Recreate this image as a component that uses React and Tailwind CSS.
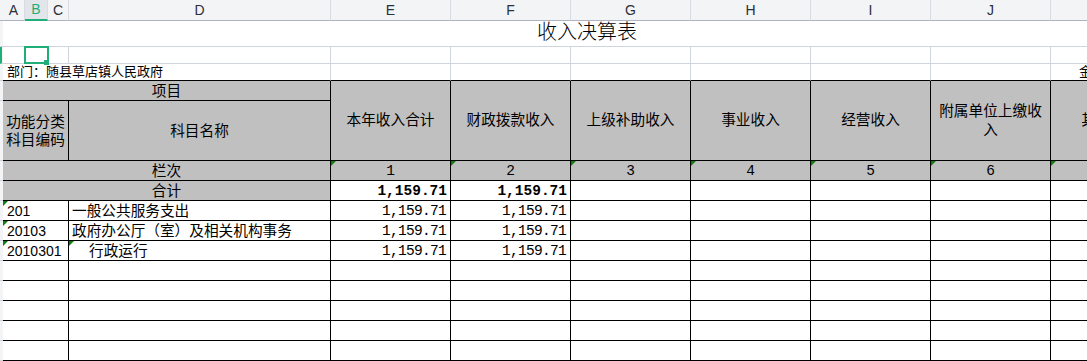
import React from "react";

const cols = ["A", "B", "C", "D", "E", "F", "G", "H", "I", "J", "K"];
const heads = ["本年收入合计", "财政拨款收入", "上级补助收入", "事业收入", "经营收入", "附属单位上缴收入", "其他收入"];
const dataRows = [
  { code: "201", name: "一般公共服务支出", e: "1,159.71", f: "1,159.71", indent: false, tri: false },
  { code: "20103", name: "政府办公厅（室）及相关机构事务", e: "1,159.71", f: "1,159.71", indent: false, tri: false },
  { code: "2010301", name: "行政运行", e: "1,159.71", f: "1,159.71", indent: true, tri: true },
  { code: "", name: "", e: "", f: "" },
  { code: "", name: "", e: "", f: "" },
  { code: "", name: "", e: "", f: "" },
  { code: "", name: "", e: "", f: "" },
  { code: "", name: "", e: "", f: "" },
];

const cjk = "font-['Liberation_Sans','Noto_Sans_CJK_SC',sans-serif]";
const mono = "font-['Liberation_Mono','Noto_Sans_CJK_SC',monospace]";
const strip = "bg-[#f3f4f6] border-b border-[#cfd4dd]";
const gridCell = "border-r border-b border-[#cfd4dd] bg-white";
const blk = "border-r border-b border-black";
const gray = "bg-[#c0c0c0]";

function Tri() {
  return (
    <div className="absolute left-0 top-0 w-0 h-0 border-t-[5px] border-r-[5px] border-t-[#0a7f0a] border-r-transparent" />
  );
}

export default function App() {
  return (
    <div className="w-[1087px] h-[361px] overflow-hidden bg-white text-black">
      <div className="grid w-[1171px] grid-cols-[3px_22px_23px_21px_262px_repeat(7,120px)] grid-rows-[21px_26px_17px_17px_20px_60px_repeat(10,20px)]">
        {/* column header row */}
        <div className="bg-[#f3f4f6] border-b border-[#aeb4c3]" />
        {cols.map((c) =>
          c === "B" ? (
            <div
              key={c}
              className={`flex items-center justify-center bg-[#e2e5ea] border-r border-r-[#d7dbe2] border-b-2 border-b-[#1fae78] text-[14px] text-[#1fae78] ${cjk}`}
            >
              {c}
            </div>
          ) : (
            <div
              key={c}
              className={`flex items-center justify-center bg-[#f3f4f6] border-r border-b border-r-[#d7dbe2] border-b-[#aeb4c3] text-[14px] text-[#2b2f3a] ${cjk}`}
            >
              {c}
            </div>
          )
        )}

        {/* title row */}
        <div className={strip} />
        <div className={`col-span-11 flex items-end justify-center pb-[2px] border-b border-[#cfd4dd] text-[20px] font-light leading-[24px] ${cjk}`}>
          收入决算表
        </div>

        {/* row 2 with selection */}
        <div className="bg-[#f3f4f6] border-b border-[#cfd4dd] border-l-2 border-l-[#1fae78]" />
        {cols.map((c) =>
          c === "B" ? (
            <div key={c} className={`${gridCell} relative`}>
              <div className="absolute -left-[1px] -top-[1px] w-[25px] h-[18px] border-2 border-[#1fae78]" />
              <div className="absolute -right-[2px] -bottom-[2px] w-[5px] h-[5px] bg-[#1fae78]" />
            </div>
          ) : (
            <div key={c} className={gridCell} />
          )
        )}

        {/* row 3: department */}
        <div className={strip} />
        <div className={`col-span-4 flex items-end pl-[4px] border-r border-[#cfd4dd] border-b border-b-black text-[13px] leading-[16px] ${cjk}`}>
          部门：随县草店镇人民政府
        </div>
        {[0, 1, 2, 3, 4, 5].map((i) => (
          <div key={i} className="border-r border-[#cfd4dd] border-b border-b-black" />
        ))}
        <div className={`flex items-end pl-[28px] whitespace-nowrap overflow-hidden border-r border-[#cfd4dd] border-b border-b-black text-[13px] leading-[16px] ${cjk}`}>
          金额单位：万元
        </div>

        {/* row 4 / 5 : header */}
        <div className={strip} />
        <div className={`col-span-4 flex items-center justify-center ${gray} ${blk} text-[14.67px] leading-[18px] ${cjk}`}>
          项目
        </div>
        {heads.map((h) => (
          <div
            key={h}
            className={`row-span-2 flex items-center justify-center text-center px-[8px] ${gray} ${blk} text-[14.67px] leading-[19px] ${cjk}`}
          >
            {h}
          </div>
        ))}
        <div className={strip} />
        <div className={`col-span-3 flex items-center justify-center text-center ${gray} ${blk} text-[14.67px] leading-[18px] ${cjk}`}>
          功能分类
          <br />
          科目编码
        </div>
        <div className={`flex items-center justify-center ${gray} ${blk} text-[14.67px] leading-[18px] ${cjk}`}>
          科目名称
        </div>

        {/* 栏次 */}
        <div className={strip} />
        <div className={`col-span-4 flex items-end justify-center ${gray} ${blk} text-[14.67px] leading-[18px] ${cjk}`}>
          栏次
        </div>
        {[1, 2, 3, 4, 5, 6, 7].map((n) => (
          <div key={n} className={`relative flex items-end justify-center ${gray} ${blk} text-[14.5px] leading-[18px] ${mono}`}>
            <Tri />
            {n}
          </div>
        ))}

        {/* 合计 */}
        <div className={strip} />
        <div className={`col-span-4 flex items-end justify-center ${gray} ${blk} text-[14.67px] leading-[18px] ${cjk}`}>
          合计
        </div>
        <div className={`flex items-end justify-end pr-[3px] bg-white ${blk} text-[14.5px] font-bold leading-[18px] ${mono}`}>
          1,159.71
        </div>
        <div className={`flex items-end justify-end pr-[3px] bg-white ${blk} text-[14.5px] font-bold leading-[18px] ${mono}`}>
          1,159.71
        </div>
        {[0, 1, 2, 3, 4].map((i) => (
          <div key={i} className={`bg-white ${blk}`} />
        ))}

        {/* data rows */}
        {dataRows.map((r, idx) => (
          <React.Fragment key={idx}>
            <div className={strip} />
            <div className={`relative col-span-3 flex items-end pl-[4px] whitespace-nowrap bg-white ${blk} text-[14px] leading-[18px] ${cjk}`}>
              {r.code && <Tri />}
              {r.code}
            </div>
            <div
              className={`relative flex items-end ${r.indent ? "pl-[20px]" : "pl-[3px]"} whitespace-nowrap bg-white ${blk} text-[14.67px] leading-[18px] ${cjk}`}
            >
              {r.tri && <Tri />}
              {r.name}
            </div>
            <div className={`flex items-end justify-end pr-[4px] bg-white ${blk} text-[14.5px] tracking-[-0.7px] leading-[18px] ${mono}`}>
              {r.e}
            </div>
            <div className={`flex items-end justify-end pr-[4px] bg-white ${blk} text-[14.5px] tracking-[-0.7px] leading-[18px] ${mono}`}>
              {r.f}
            </div>
            {[0, 1, 2, 3, 4].map((i) => (
              <div key={i} className={`bg-white ${blk}`} />
            ))}
          </React.Fragment>
        ))}
      </div>
    </div>
  );
}
